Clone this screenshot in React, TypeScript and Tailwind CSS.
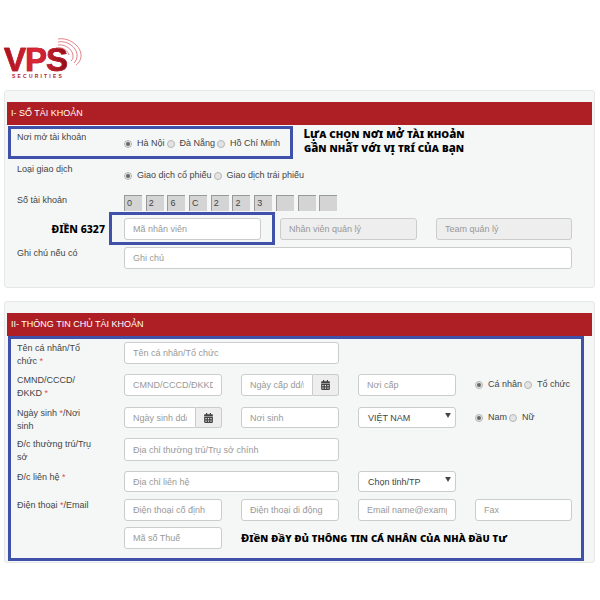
import type { ReactNode } from "react";
import { FaCalendarAlt } from "react-icons/fa";

const inputClass =
  "block h-full w-full min-w-0 rounded-[3px] border border-[#ccc] bg-white px-[8px] text-[9px] text-[#555] placeholder:text-[#999] outline-none";

function Field({
  placeholder,
  className,
  disabled,
}: {
  placeholder: string;
  className: string;
  disabled?: boolean;
}) {
  return (
    <div className={className}>
      <input
        placeholder={placeholder}
        readOnly
        className={
          disabled
            ? "block h-full w-full min-w-0 rounded-[3px] border border-[#ccc] bg-[#eeeeee] px-[8px] text-[9px] placeholder:text-[#999] outline-none"
            : inputClass
        }
      />
    </div>
  );
}

function DateField({ placeholder, className }: { placeholder: string; className: string }) {
  return (
    <div className={`flex ${className}`}>
      <input
        placeholder={placeholder}
        readOnly
        className="block h-full w-full min-w-0 rounded-l-[3px] border border-[#ccc] bg-white px-[8px] text-[9px] placeholder:text-[#999] outline-none"
      />
      <span className="flex h-full w-[26px] shrink-0 items-center justify-center rounded-r-[3px] border border-l-0 border-[#ccc] bg-[#eeeeee] text-[#444]">
        <FaCalendarAlt className="h-[10px] w-[9px]" />
      </span>
    </div>
  );
}

function SelectField({ value }: { value: string }) {
  return (
    <div className="relative h-full w-[98px] rounded-[3px] border border-[#ccc] bg-white pl-[9px] text-[9px] leading-[20px] text-[#444]">
      {value}
      <svg viewBox="0 0 8 7" className="absolute right-[4px] top-[5px] h-[5px] w-[6px]">
        <path d="M0 0h8L4 7z" fill="#444" />
      </svg>
    </div>
  );
}

function Radio({ label, checked }: { label: string; checked?: boolean }) {
  return (
    <span className="flex items-center gap-[5px]">
      <span className="flex h-[8px] w-[8px] items-center justify-center rounded-full border border-[#b5b5b5] bg-[#e4e4e4]">
        {checked && <span className="h-[4px] w-[4px] rounded-full bg-[#666]" />}
      </span>
      <span>{label}</span>
    </span>
  );
}

function Row({
  label,
  className,
  labelClass,
  children,
}: {
  label?: ReactNode;
  className: string;
  labelClass?: string;
  children?: ReactNode;
}) {
  return (
    <div className={`flex ${className}`}>
      <div className={`w-[117px] shrink-0 pl-[10px] pr-[24px] text-[9px] leading-[13px] text-[#444] ${labelClass ?? ""}`}>
        {label}
      </div>
      <div className="flex h-full gap-[19px]">{children}</div>
    </div>
  );
}

function Star() {
  return <span className="text-[#d9534f]">*</span>;
}

const accountDigits = ["0", "2", "6", "C", "2", "2", "3", "", "", ""];

export default function App() {
  return (
    <div className="relative h-[600px] w-[600px] overflow-hidden bg-white font-['Liberation_Sans',Arial,sans-serif]">
      {/* logo */}
      <div className="relative h-[90px]">
        <div className="absolute left-[4px] top-[47px] bg-gradient-to-r from-[#a8101c] via-[#e0283a] to-[#8f0e18] bg-clip-text text-[33px] leading-[26px] font-black tracking-[-1px] text-transparent [-webkit-text-stroke:0.6px_#b81c28]">
          VPS
        </div>
        <div className="absolute left-[12px] top-[73px] text-[5px] leading-[6px] font-bold tracking-[2.2px] text-[#b5202a]">
          SECURITIES
        </div>
        <svg viewBox="0 0 30 34" className="absolute left-[54px] top-[36px] h-[34px] w-[30px]" fill="none" stroke="#d9636b" strokeWidth="0.8">
          <path d="M4 3c10-2 22 6 23 15 .5 5-2 9-5 11" />
          <path d="M4 6c9-2 18 5 19 12 .5 4-1 7-3 9" />
          <path d="M4 9c7-1 14 4 15 10 .3 3-.6 5-2 6" />
          <path d="M4 12c5-1 10 3 11 7" />
        </svg>
      </div>

      {/* section I */}
      <section className="ml-[4px] mr-[5px] h-[198px] rounded-[3px] border border-[#e6e8e8] bg-[#f5f7f7] px-[2px] pt-[11px]">
        <div className="h-[23px] bg-[#ae1f25] pl-[4px] text-[9px] leading-[23px] text-white">
          I- SỔ TÀI KHOẢN
        </div>
        <Row label="Nơi mở tài khoản" className="h-[35px]" labelClass="pt-[6px]">
          <div className="flex items-start gap-[2px] pt-[12px] text-[9px] leading-[13px] text-[#444]">
            <Radio label="Hà Nội" checked />
            <Radio label="Đà Nẵng" />
            <Radio label="Hồ Chí Minh" />
          </div>
        </Row>
        <Row label="Loại giao dịch" className="h-[30px]" labelClass="pt-[3px]">
          <div className="flex items-start gap-[2px] pt-[9px] text-[9px] leading-[13px] text-[#444]">
            <Radio label="Giao dịch cổ phiếu" checked />
            <Radio label="Giao dịch trái phiếu" />
          </div>
        </Row>
        <Row label="Số tài khoản" className="h-[28px]" labelClass="pt-[4px]">
          <div className="flex gap-[3.7px] pt-[5px]">
            {accountDigits.map((d, i) => (
              <span
                key={i}
                className="h-[16px] w-[18px] border-t border-l border-[#999] bg-[#d4d4d4] pl-[2px] text-[9px] leading-[15px] text-[#444]"
              >
                {d}
              </span>
            ))}
          </div>
        </Row>
        <div className="flex h-[22px]">
          <div className="w-[98px] shrink-0 text-right text-[10.5px] leading-[22px] font-extrabold [font-family:'Noto_Sans',sans-serif] text-black">
            ĐIỀN 6327
          </div>
          <div className="ml-[19px] flex h-full gap-[19px]">
            <Field placeholder="Mã nhân viên" className="h-full w-[137px]" />
            <Field placeholder="Nhân viên quản lý" className="h-full w-[137px]" disabled />
            <Field placeholder="Team quản lý" className="h-full w-[136px]" disabled />
          </div>
        </div>
        <Row label="Ghi chú nếu có" className="mt-[7px] h-[22px]">
          <Field placeholder="Ghi chú" className="h-full w-[448px]" />
        </Row>
      </section>

      {/* section II */}
      <section className="ml-[4px] mr-[5px] mt-[13px] h-[262px] rounded-[3px] border border-[#e6e8e8] bg-[#f5f7f7] px-[2px] pt-[11px]">
        <div className="h-[23px] bg-[#ae1f25] pl-[4px] text-[9px] leading-[23px] text-white">
          II- THÔNG TIN CHỦ TÀI KHOẢN
        </div>
        <Row
          label={
            <>
              Tên cá nhân/Tổ
              <br />
              chức <Star />
            </>
          }
          className="mt-[6px] h-[22px]"
        >
          <Field placeholder="Tên cá nhân/Tổ chức" className="h-full w-[215px]" />
        </Row>
        <Row
          label={
            <>
              CMND/CCCD/
              <br />
              ĐKKD <Star />
            </>
          }
          className="mt-[10px] h-[22px]"
        >
          <Field placeholder="CMND/CCCD/ĐKKD" className="h-full w-[98px]" />
          <DateField placeholder="Ngày cấp dd/mm" className="h-full w-[98px]" />
          <Field placeholder="Nơi cấp" className="h-full w-[98px]" />
          <div className="flex h-full items-center gap-[2px] text-[9px] text-[#444]">
            <Radio label="Cá nhân" checked />
            <Radio label="Tổ chức" />
          </div>
        </Row>
        <Row
          label={
            <>
              Ngày sinh <Star />/Nơi
              <br />
              sinh
            </>
          }
          className="mt-[11px] h-[21px]"
        >
          <DateField placeholder="Ngày sinh dd/mm" className="h-full w-[98px]" />
          <Field placeholder="Nơi sinh" className="h-full w-[98px]" />
          <SelectField value="VIỆT NAM" />
          <div className="flex h-full items-center gap-[2px] text-[9px] text-[#444]">
            <Radio label="Nam" checked />
            <Radio label="Nữ" />
          </div>
        </Row>
        <Row
          label={
            <>
              Đ/c thường trú/Trụ
              <br />
              sở
            </>
          }
          className="mt-[10px] h-[23px]"
        >
          <Field placeholder="Địa chỉ thường trú/Trụ sở chính" className="h-full w-[215px]" />
        </Row>
        <Row
          label={
            <>
              Đ/c liên hệ <Star />
            </>
          }
          className="mt-[10px] h-[21px]"
        >
          <Field placeholder="Địa chỉ liên hệ" className="h-full w-[215px]" />
          <SelectField value="Chọn tỉnh/TP" />
        </Row>
        <Row
          label={
            <>
              Điện thoại <Star />/Email
            </>
          }
          className="mt-[7px] h-[22px]"
        >
          <Field placeholder="Điện thoại cố định" className="h-full w-[98px]" />
          <Field placeholder="Điện thoại di động" className="h-full w-[98px]" />
          <Field placeholder="Email name@example.com" className="h-full w-[98px]" />
          <Field placeholder="Fax" className="h-full w-[97px]" />
        </Row>
        <Row className="mt-[6px] h-[22px]">
          <Field placeholder="Mã số Thuế" className="h-full w-[98px]" />
          <div className="text-[11.3px] leading-[22px] font-extrabold [font-family:'Noto_Sans',sans-serif] [font-variant:small-caps] text-black">
            Điền đầy đủ thông tin cá nhân của nhà đầu tư
          </div>
        </Row>
      </section>

      {/* blue annotation frames */}
      <div className="absolute left-[8px] top-[126px] h-[33px] w-[285px] border-[3px] border-[#3f51a8]" />
      <div className="absolute left-[109px] top-[212px] h-[33px] w-[166px] border-[3px] border-[#3f51a8]" />
      <div className="absolute left-[8px] top-[336px] h-[225px] w-[576px] border-[3px] border-[#3f51a8]" />
      <div className="absolute left-[296px] top-[126px] w-[176px] text-center text-[11.7px] leading-[14px] font-extrabold [font-family:'Noto_Sans',sans-serif] [font-variant:small-caps] text-black">
        Lựa chọn nơi mở tài khoản
        <br />
        gần nhất với vị trí của bạn
      </div>
    </div>
  );
}
